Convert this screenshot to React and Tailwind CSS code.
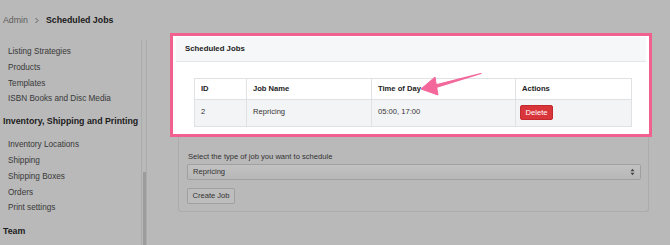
import React from "react";

const sideItem = "h-[15.8px] leading-[15.8px] pl-[8px] text-[8.2px] text-[#383838]";
const sideHead = "pl-[3px] text-[8.8px] font-bold text-[#1c1c1c] h-[16px] leading-[16px]";

export default function App() {
  return (
    <div
      className="w-[670px] h-[245px] overflow-hidden bg-[#b9b9b9] flex"
      style={{ fontFamily: '"Liberation Sans", Arial, sans-serif' }}
    >
      {/* Left column */}
      <div className="w-[147px] flex flex-col shrink-0">
        <div className="h-[40px] flex items-center pl-[3px] pt-[1px] gap-[5px] text-[8.8px]">
          <span className="text-[#5c5c5c]">Admin</span>
          <svg width="6" height="7" viewBox="0 0 6 7" className="mx-[1px]">
            <path d="M1.5 1 L4 3.5 L1.5 6" fill="none" stroke="#5c5c5c" strokeWidth="1" />
          </svg>
          <span className="font-bold text-[#1a1a1a]">Scheduled Jobs</span>
        </div>
        <div className="flex-1 flex">
          <div className="flex-1 pt-[4px]">
            <div className={sideItem}>Listing Strategies</div>
            <div className={sideItem}>Products</div>
            <div className={sideItem}>Templates</div>
            <div className={sideItem}>ISBN Books and Disc Media</div>
            <div className={sideHead + " mt-[6px]"}>Inventory, Shipping and Printing</div>
            <div className="mt-[8px]">
              <div className={sideItem}>Inventory Locations</div>
              <div className={sideItem}>Shipping</div>
              <div className={sideItem}>Shipping Boxes</div>
              <div className={sideItem}>Orders</div>
              <div className={sideItem}>Print settings</div>
            </div>
            <div className={sideHead + " mt-[7px]"}>Team</div>
          </div>
          <div className="w-[6px] border-l border-r border-[#acacac] flex flex-col">
            <div className="mt-[132px] ml-[1px] w-[3px] flex-1 bg-[#9c9c9c]" />
          </div>
        </div>
      </div>

      {/* Main */}
      <div className="flex-1 pt-[33px] pl-[23px]">
        <div className="relative w-[482px] h-[104px] border-[3px] border-[#f2608f] bg-white px-[3px] pt-[1px]">
          <div className="h-[25px] bg-[#f5f7f8] border-b border-[#e4e7ea] flex items-center pl-[9px] text-[7.8px] font-bold text-[#222]">
            Scheduled Jobs
          </div>
          <div className="ml-[18px] mt-[16px] w-[438px] border border-[#dfe2e5] text-[7.6px] text-[#333]">
            <div className="flex h-[21px] border-b border-[#dfe2e5] font-bold text-[#222]">
              <div className="w-[52px] border-r border-[#dfe2e5] pl-[6px] flex items-center">ID</div>
              <div className="w-[125px] border-r border-[#dfe2e5] pl-[6px] flex items-center">Job Name</div>
              <div className="w-[144px] border-r border-[#dfe2e5] pl-[6px] flex items-center">Time of Day</div>
              <div className="flex-1 pl-[6px] flex items-center">Actions</div>
            </div>
            <div className="flex h-[26px] bg-[#f3f4f5]">
              <div className="w-[52px] border-r border-[#dfe2e5] pl-[6px] pt-[6px]">2</div>
              <div className="w-[125px] border-r border-[#dfe2e5] pl-[6px] pt-[6px]">Repricing</div>
              <div className="w-[144px] border-r border-[#dfe2e5] pl-[6px] pt-[6px]">05:00, 17:00</div>
              <div className="flex-1 pl-[4px] pt-[5px]">
                <button className="w-[33px] h-[15px] rounded-[2px] bg-[#d9363c] border border-[#c22a30] text-white text-[7.6px] leading-none">
                  Delete
                </button>
              </div>
            </div>
          </div>
          {/* annotation arrow */}
          <svg
            className="absolute left-[248px] top-[37px]"
            width="64"
            height="24"
            viewBox="0 0 64 24"
          >
            <path d="M60 0.5 L14 12 L15 14.5 Z" fill="#f3679a" stroke="#f3679a" strokeWidth="1.2" strokeLinejoin="round" />
            <path d="M0 16 L14 4 L17 22 Z" fill="#f3679a" stroke="#f3679a" strokeWidth="1" strokeLinejoin="round" />
          </svg>
        </div>
        <div className="ml-[8px] w-[471px] h-[75px] border border-t-0 border-[#acacac] rounded-b-[3px] pt-[15px] px-[8px]">
          <div className="text-[7.6px] text-[#333] leading-[10px] pl-[1px]">
            Select the type of job you want to schedule
          </div>
          <div className="mt-[2px] w-[454px] h-[16px] rounded-[2px] border border-[#a0a0a0] bg-gradient-to-b from-[#c2c2c2] to-[#b7b7b7] flex items-center justify-between pl-[5px] pr-[5px] text-[7.6px] text-[#333]">
            <span>Repricing</span>
            <svg width="5" height="8" viewBox="0 0 5 8">
              <path d="M0.5 3.2 L2.5 0.8 L4.5 3.2 Z" fill="#444" />
              <path d="M0.5 4.8 L2.5 7.2 L4.5 4.8 Z" fill="#444" />
            </svg>
          </div>
          <button className="mt-[8px] w-[48px] h-[16px] rounded-[2px] border border-[#a0a0a0] bg-[#bdbdbd] text-[7.6px] text-[#333] leading-none">
            Create Job
          </button>
        </div>
      </div>
    </div>
  );
}
